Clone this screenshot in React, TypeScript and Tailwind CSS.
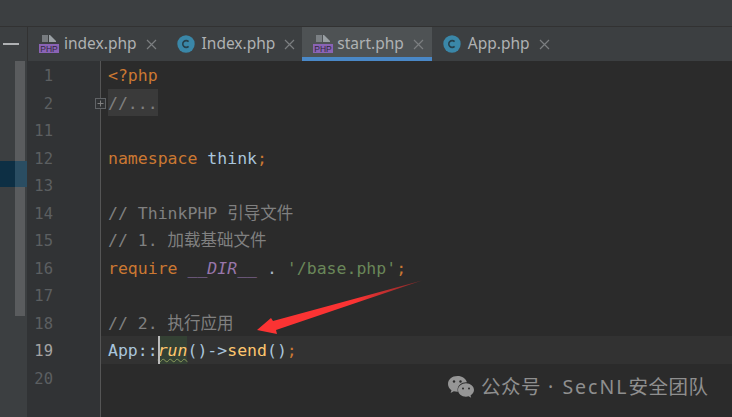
import type { ReactNode } from "react";

const mono = "font-['DejaVu_Sans_Mono','Noto_Sans_CJK_SC',monospace]";
const cell = "flex h-full items-center pt-[4px]";

function PhpIcon() {
  return (
    <svg width="20" height="20" viewBox="0 0 20 20" className="shrink-0">
      <path d="M3 1h6v7H3z" fill="#8b9094" opacity="0.75" />
      <path d="M10 1h1l6 6v1h-7z" fill="#9aa0a4" />
      <rect x="0" y="10" width="20" height="9" fill="#8a63b5" />
      <text x="10" y="18" textAnchor="middle" fontSize="8.5" fontFamily="Liberation Sans, sans-serif" fill="#2f2a38">
        PHP
      </text>
    </svg>
  );
}

function ClassIcon() {
  return (
    <svg width="18" height="18" viewBox="0 0 18 18" className="shrink-0">
      <circle cx="9" cy="9" r="8.7" fill="#3a87a8" />
      <path d="M11.6 6.600a3.400 3.400 0 1 0 0 4.800" fill="none" stroke="#26404c" strokeWidth="1.600" />
    </svg>
  );
}

function CloseX() {
  return (
    <svg width="11" height="11" viewBox="0 0 11 11" className="shrink-0">
      <path d="M1 1l9 9M10 1l-9 9" stroke="#7b7e80" strokeWidth="1.200" />
    </svg>
  );
}

function Tab({ name, kind, active }: { name: string; kind: "php" | "class"; active?: boolean }) {
  return (
    <div
      className={
        active
          ? "flex h-full items-center border-b-[4px] border-[#4a88c7] bg-[#4e5254] pl-[11px] pr-[8px] pt-[4px]"
          : kind === "php"
            ? "flex h-full items-center pl-[11px] pr-[9px] py-[4px]"
            : "flex h-full items-center pl-[11px] pr-[7px] py-[4px]"
      }
    >
      {kind === "php" ? <PhpIcon /> : <ClassIcon />}
      <span
        className={
          active
            ? "ml-[4px] mr-[9px] text-[15.5px] leading-none text-[#afb1b3]"
            : kind === "php"
              ? "ml-[5px] mr-[9px] text-[15.5px] leading-none text-[#afb1b3]"
              : "ml-[7px] mr-[9px] text-[15.5px] leading-none text-[#afb1b3]"
        }
      >
        {name}
      </span>
      <CloseX />
    </div>
  );
}

const K = ({ children }: { children: ReactNode }) => <span className="text-[#cc7832]">{children}</span>;
const G = ({ children }: { children: ReactNode }) => <span className="text-[#808080]">{children}</span>;

const lineNumbers = ["1", "2", "11", "12", "13", "14", "15", "16", "17", "18", "19", "20"];

const codeLines: ReactNode[] = [
  <span className={cell}>
    <K>{"<?php"}</K>
  </span>,
  <span className={`${cell} bg-[#3a3a3a] text-[#808080]`}>{"//..."}</span>,
  null,
  <span className={cell}>
    <span>
      <K>namespace</K> <span className="text-[#a9c5dc]">think</span>
      <K>;</K>
    </span>
  </span>,
  null,
  <span className={cell}>
    <G>// ThinkPHP 引导文件</G>
  </span>,
  <span className={cell}>
    <G>// 1. 加载基础文件</G>
  </span>,
  <span className={cell}>
    <span>
      <K>require</K> <span className="italic text-[#9876aa]">__DIR__</span> <span className="text-[#a9b7c6]">.</span>{" "}
      <span className="text-[#6a8759]">'/base.php'</span>
      <K>;</K>
    </span>
  </span>,
  null,
  <span className={cell}>
    <G>// 2. 执行应用</G>
  </span>,
  <>
    <span className={`${cell} text-[#a9c5dc]`}>App::</span>
    <span className={`${cell} relative bg-[#344134] italic text-[#ffc66d] underline decoration-wavy decoration-[#8a9a5b] decoration-1 underline-offset-2`}>
      run
      <span className="absolute left-0 top-0 h-full w-[2px] bg-[#bbbbbb]" />
    </span>
    <span className={cell}>
      <span>
        <span className="text-[#a9c5dc]">()-&gt;</span>
        <span className="text-[#ffc66d]">send</span>
        <span className="text-[#a9c5dc]">()</span>
        <K>;</K>
      </span>
    </span>
  </>,
  null,
];

export default function App() {
  return (
    <div className="relative flex h-[417px] w-[732px] flex-col overflow-hidden bg-[#2b2b2b] font-['Noto_Sans','Noto_Sans_CJK_SC',sans-serif]">
      <div className="h-[27px] shrink-0 border-b border-[#323232] bg-[#3c3f41]" />

      <div className="flex h-[34px] shrink-0 bg-[#3c3f41]">
        <div className="flex w-[28px] shrink-0 items-center border-r border-[#323232] pl-[3px]">
          <div className="h-[2px] w-[16px] bg-[#afb1b3]" />
        </div>
        <Tab name="index.php" kind="php" />
        <Tab name="Index.php" kind="class" />
        <Tab name="start.php" kind="php" active />
        <Tab name="App.php" kind="class" />
      </div>

      <div className="flex min-h-0 flex-1">
        {/* left tool strip */}
        <div className="flex w-[27px] shrink-0 flex-col bg-[#3c3f41] pt-[100px]">
          <div className="h-[26px] bg-[#0d2f44]" />
        </div>

        {/* gutter */}
        <div className={`w-[74px] shrink-0 border-r border-[#555555] bg-[#313335] text-[15.5px] ${mono}`}>
          {lineNumbers.map((n) => (
            <div
              key={n}
              className={
                n === "19"
                  ? "flex h-[27.5px] items-center justify-end pr-[47px] pt-[4px] text-[#a4a3a3]"
                  : "flex h-[27.5px] items-center justify-end pr-[47px] pt-[4px] text-[#5c5f61]"
              }
            >
              {n}
            </div>
          ))}
        </div>

        {/* code */}
        <div className={`min-w-0 flex-1 text-[16.5px] ${mono}`}>
          {codeLines.map((line, i) => (
            <div
              key={i}
              className={
                i === 10
                  ? "flex h-[27.5px] whitespace-pre bg-[#323232] pl-[7px]"
                  : "flex h-[27.5px] whitespace-pre pl-[7px]"
              }
            >
              {line}
            </div>
          ))}
        </div>
      </div>

      {/* scrollbar thumb over the strip */}
      <div className="absolute left-[15px] top-[61px] h-[255px] w-[10px] bg-[#5a5c5e]" />
      <div className="absolute left-[15px] top-[161px] h-[26px] w-[12px] bg-[#2a4d62]" />

      {/* fold marker */}
      <svg className="absolute left-[95px] top-[98px]" width="11" height="11" viewBox="0 0 11 11">
        <rect x="0.5" y="0.5" width="10" height="10" fill="#313335" stroke="#606366" />
        <path d="M2.500 5.500h6M5.500 2.500v6" stroke="#808080" />
      </svg>

      {/* red annotation arrow */}
      <svg className="absolute left-[250px] top-[275px]" width="175" height="60" viewBox="0 0 175 60">
        <defs>
          <linearGradient id="tail" x1="0" x2="1" y1="0" y2="0">
            <stop offset="0.6" stopColor="#fb3333" />
            <stop offset="1" stopColor="#7a2a2a" />
          </linearGradient>
        </defs>
        <path d="M172 5.500 L26 55 L27 59 L7 55 L21 43 L23 46 Z" fill="url(#tail)" />
      </svg>

      {/* watermark */}
      <div className="absolute left-[447px] top-[375px] flex items-center gap-[6px] text-[19.5px] leading-none tracking-[0.5px] text-[#8f8f8f]">
        <svg width="28" height="24" viewBox="0 0 28 24">
          <path d="M10.500 1C5 1 1 4.500 1 9c0 2.600 1.300 4.700 3.500 6.200L3.600 18l3.200-1.700c1.100.3 2.200.5 3.400.5.200 0 .5 0 .7 0-.2-.7-.3-1.300-.3-2 0-4.200 3.800-7.500 8.500-7.500h.8C19 3.500 15.200 1 10.500 1z" fill="#969696" />
          <path d="M27 15c0-3.700-3.600-6.700-8-6.700s-8 3-8 6.700 3.600 6.700 8 6.700c.9 0 1.800-.1 2.600-.4l2.600 1.500-.7-2.400c2.100-1.300 3.500-3.300 3.500-5.400z" fill="#969696" />
          <circle cx="7" cy="6.500" r="1.200" fill="#2b2b2b" />
          <circle cx="13.500" cy="6.500" r="1.200" fill="#2b2b2b" />
          <circle cx="16" cy="13.500" r="1" fill="#2b2b2b" />
          <circle cx="22" cy="13.500" r="1" fill="#2b2b2b" />
        </svg>
        <span>
          公众号<span className="tracking-[2px]"> · SecNL</span>安全团队
        </span>
      </div>
    </div>
  );
}
